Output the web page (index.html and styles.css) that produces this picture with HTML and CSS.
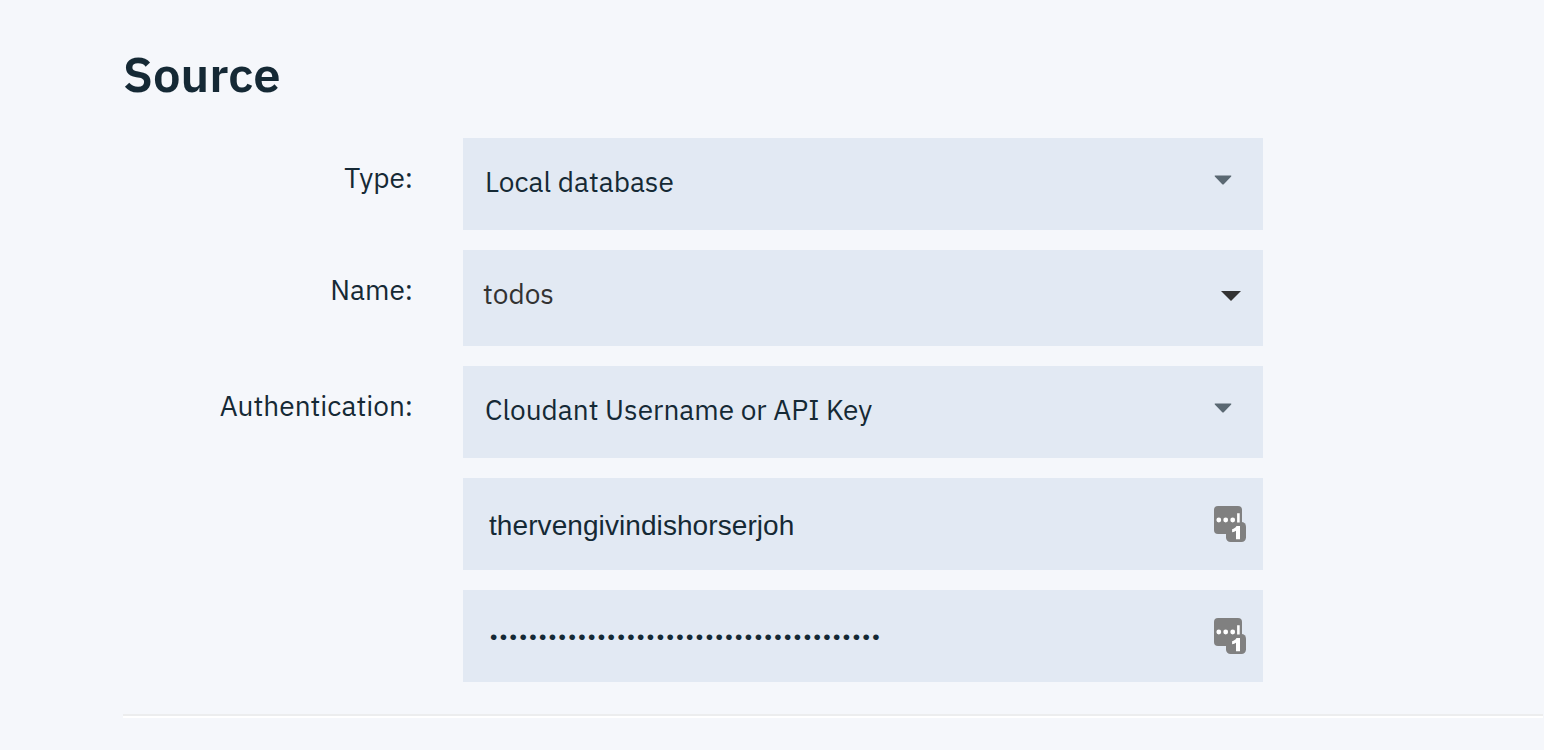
FILE: index.html
```html
<!DOCTYPE html>
<html lang="en">
<head>
<meta charset="utf-8">
<title>Source</title>
<link rel="stylesheet" href="styles.css">
</head>
<body>
<svg class="defs" width="0" height="0" aria-hidden="true">
  <symbol id="key" viewBox="0 0 32 36">
    <rect width="28" height="28" rx="4" fill="#808080"/>
    <rect x="12" y="16" width="20" height="20" rx="4.500" fill="#808080"/>
    <g fill="#fff"><circle cx="4.800" cy="14" r="2.400"/><circle cx="11.700" cy="14" r="2.400"/><circle cx="18.700" cy="14" r="2.400"/><path d="M23.100 7.200h2.600v9.300h-2.600zM22.500 20.100h3.500V33.200h-4v-8.500c-1.100.8-2.300 1.300-3.900 1.600v-3c1.900-.6 3.400-1.500 4.400-3.200z"/></g>
  </symbol>
</svg>
<main class="section">
  <h1 class="title">Source</h1>
  <div class="form">
    <div class="label">Type:</div>
    <div class="field"><span class="value">Local database</span>
      <svg class="arrow" width="18" height="10" viewBox="0 0 18 10"><path d="M1.200.5h15.600q1 0 .4.900L10 9q-1 1-2 0L.8 1.400q-.6-.9.400-.9z" fill="#5a6872"/></svg></div>
    <div class="label">Name:</div>
    <div class="field tall"><span class="value todos">todos</span>
      <svg class="arrow dark" width="20" height="10" viewBox="0 0 20 10"><path d="M0 0h20L10 10z" fill="#333"/></svg></div>
    <div class="label">Authentication:</div>
    <div class="field"><span class="value">Cloudant Username or API Key</span>
      <svg class="arrow" width="18" height="10" viewBox="0 0 18 10"><path d="M1.200.5h15.600q1 0 .4.900L10 9q-1 1-2 0L.8 1.400q-.6-.9.400-.9z" fill="#5a6872"/></svg></div>
    <div class="field input"><span class="value typed">thervengivindishorserjoh</span>
      <svg width="32" height="36"><use href="#key"/></svg></div>
    <div class="field input"><span class="value dots">••••••••••••••••••••••••••••••••••••••••</span>
      <svg width="32" height="36"><use href="#key"/></svg></div>
  </div>
</main>
</body>
</html>
```
FILE: styles.css
```css
* { box-sizing: border-box; }
body {
  margin: 0;
  height: 750px;
  overflow: hidden;
  background: #f5f7fb;
  color: #152935;
  font: 28px/36px "IBM Plex Sans", Roboto, sans-serif;
}
.defs { display: block; }
.section {
  height: 718px;
  margin: 0 1px 0 123px;
  padding-top: 42px;
  border-bottom: 2px solid #fff;
  box-shadow: inset 0 -2px #ecedee;
}
.title {
  margin: 0 0 32px;
  font-size: 49px;
  line-height: 64px;
  font-weight: 600;
}
.form {
  display: grid;
  grid-template-columns: 290px 800px;
  column-gap: 50px;
  row-gap: 20px;
}
.label { padding-top: 22px; text-align: right; white-space: nowrap; }
.field {
  grid-column: 2;
  display: flex;
  justify-content: space-between;
  align-items: flex-start;
  height: 92px;
  padding: 26px 31px 0 22px;
  background: #e2e9f3;
}
.tall { height: 96px; padding-right: 22px; padding-left: 20px; }
.value { white-space: nowrap; }
.todos { color: #333; }
.arrow { margin-top: 11px; }
.dark { margin-top: 15px; }
.input { padding: 28px 17px 0 26px; font-family: "Liberation Sans", Arial, sans-serif; }
.typed { padding-top: 2px; letter-spacing: .08px; }
.dots { padding: 1px 0 0 1px; font-size: 21px; letter-spacing: 2.450px; }
```
